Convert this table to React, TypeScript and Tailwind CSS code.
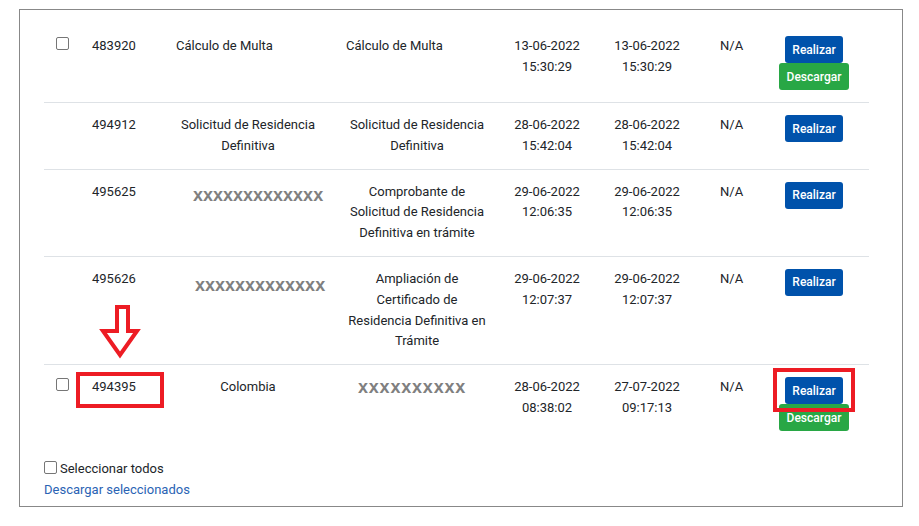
import React from "react";

const cols = "grid grid-cols-[36px_84px_168px_176px_78px_122px_51px_110px]";

function Check({ className = "" }: { className?: string }) {
  return (
    <input
      type="checkbox"
      className={"appearance-none block w-[13px] h-[13px] m-0 border border-[#767676] rounded-[2px] bg-white " + className}
    />
  );
}

function Realizar() {
  return (
    <button className="h-[27px] px-[7px] rounded-[3px] bg-[#0052ab] text-white text-[12px] leading-none font-medium">
      Realizar
    </button>
  );
}

function Descargar() {
  return (
    <button className="h-[27px] px-[8px] rounded-[3px] bg-[#28a745] text-white text-[12px] leading-none font-medium">
      Descargar
    </button>
  );
}

function Xs({ n, className = "" }: { n: number; className?: string }) {
  return (
    <div
      className={
        "font-['Liberation_Sans',Arial,sans-serif] font-bold text-[18px] leading-[18px] text-[#808080] whitespace-nowrap " +
        className
      }
    >
      {"x".repeat(n)}
    </div>
  );
}

type Row = {
  check: boolean;
  id: string;
  name: React.ReactNode;
  desc: React.ReactNode;
  d1: [string, string];
  d2: [string, string];
  download: boolean;
  left?: boolean;
  last?: boolean;
};

const rows: Row[] = [
  {
    check: true,
    id: "483920",
    name: "Cálculo de Multa",
    desc: "Cálculo de Multa",
    d1: ["13-06-2022", "15:30:29"],
    d2: ["13-06-2022", "15:30:29"],
    download: true,
    left: true,
  },
  {
    check: false,
    id: "494912",
    name: "Solicitud de Residencia Definitiva",
    desc: "Solicitud de Residencia Definitiva",
    d1: ["28-06-2022", "15:42:04"],
    d2: ["28-06-2022", "15:42:04"],
    download: false,
  },
  {
    check: false,
    id: "495625",
    name: <Xs n={13} className="mt-[4px] pl-[17px] text-left" />,
    desc: "Comprobante de Solicitud de Residencia Definitiva en trámite",
    d1: ["29-06-2022", "12:06:35"],
    d2: ["29-06-2022", "12:06:35"],
    download: false,
  },
  {
    check: false,
    id: "495626",
    name: <Xs n={13} className="mt-[7px] pl-[19px] text-left" />,
    desc: "Ampliación de Certificado de Residencia Definitiva en Trámite",
    d1: ["29-06-2022", "12:07:37"],
    d2: ["29-06-2022", "12:07:37"],
    download: false,
  },
  {
    check: true,
    id: "494395",
    name: "Colombia",
    desc: <Xs n={10} className="mt-[1px] pl-[12px] text-left tracking-[0.8px]" />,
    d1: ["28-06-2022", "08:38:02"],
    d2: ["27-07-2022", "09:17:13"],
    download: true,
    last: true,
  },
];

export default function App() {
  return (
    <div className="relative w-[919px] h-[526px] bg-white font-['Roboto',sans-serif] text-[13px] leading-[20.8px] text-[#212529] pl-[19px] pt-[9px]">
      <div className="w-[884px] h-[498px] border border-[#888888] pl-[24px] pt-[14px]">
        <div className="w-[825px]">
          {rows.map((r) => (
            <div key={r.id} className={cols + (r.last ? "" : " border-b border-[#dee2e6]")}>
              <div className="pl-[12px] pt-[13px]">{r.check && <Check />}</div>
              <div className="pl-[12px] py-[12px]">{r.id}</div>
              <div className={"px-[12px] py-[12px] " + (r.left ? "text-left" : "text-center")}>{r.name}</div>
              <div className={"py-[12px] " + (r.left ? "pl-[14px] text-left" : "pl-[14px] pr-[20px] text-center")}>{r.desc}</div>
              <div className="py-[12px] text-center whitespace-nowrap">
                <div>{r.d1[0]}</div>
                <div>{r.d1[1]}</div>
              </div>
              <div className="py-[12px] text-center whitespace-nowrap">
                <div>{r.d2[0]}</div>
                <div>{r.d2[1]}</div>
              </div>
              <div className="pl-[12px] py-[12px]">N/A</div>
              <div className="py-[12px] flex flex-col items-center">
                <Realizar />
                {r.download && <Descargar />}
              </div>
            </div>
          ))}
          <div className="mt-[16px] flex items-start gap-[3px]">
            <Check className="mt-[2px]" />
            <span>Seleccionar todos</span>
          </div>
          <div className="text-[#2a63b4]">Descargar seleccionados</div>
        </div>
      </div>

      {/* Red annotations */}
      <div className="absolute left-[76px] top-[372px] w-[88px] h-[36px] border-[4px] border-[#ed1c24]" />
      <div className="absolute left-[773px] top-[368px] w-[82px] h-[44px] border-[4px] border-[#ed1c24]" />
      <svg
        className="absolute left-[95px] top-[300px]"
        width="50"
        height="62"
        viewBox="95 300 50 62"
      >
        <polygon
          points="117,307 128,307 128,331 137,331 120,355 103,331 117,331"
          fill="#ffffff"
          stroke="#ed1c24"
          strokeWidth="4"
          strokeLinejoin="miter"
        />
      </svg>
    </div>
  );
}
